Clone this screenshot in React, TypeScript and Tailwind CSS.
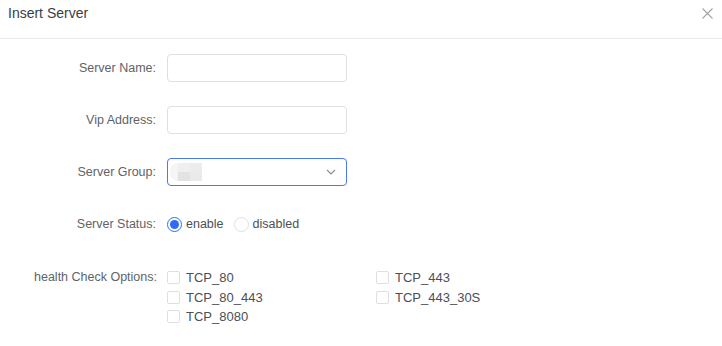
import { useState } from 'react';

const options = ['TCP_80', 'TCP_443', 'TCP_80_443', 'TCP_443_30S', 'TCP_8080'];

function Field({ label, children, className = '' }: { label: string; children: React.ReactNode; className?: string }) {
  return (
    <div className={`flex items-center ${className}`}>
      <label className="w-[157px] shrink-0 pr-[1px] text-right text-[12.5px] text-[#5f6368]">{label}</label>
      <div className="ml-[10px]">{children}</div>
    </div>
  );
}

export default function App() {
  const [status, setStatus] = useState('enable');
  const [checked, setChecked] = useState<string[]>([]);

  const toggle = (o: string) =>
    setChecked(checked.includes(o) ? checked.filter((x) => x !== o) : [...checked, o]);

  return (
    <div className="w-[722px] h-[346px] bg-white font-['Liberation_Sans',Arial,sans-serif] text-[#4b4f56]">
      {/* header */}
      <div className="h-[39px] border-b border-[#ebebeb] flex items-center justify-between pl-[8px] pr-[9px]">
        <span className="text-[14px] text-[#3a3d42] -mt-[12px]">Insert Server</span>
        <button className="-mt-[12px] text-[#a0a3a8]" aria-label="close">
          <svg width="11" height="11" viewBox="0 0 11 11" stroke="currentColor" strokeWidth="1.1">
            <path d="M0.5 0.5L10.5 10.5M10.5 0.5L0.5 10.5" />
          </svg>
        </button>
      </div>

      <div className="pt-[15px]">
        <Field label="Server Name:" className="h-[28px] mb-[24px]">
          <input className="w-[180px] h-[28px] rounded-[4px] border border-[#dcdfe6] outline-none px-2 text-[13px]" />
        </Field>
        <Field label="Vip Address:" className="h-[28px] mb-[24px]">
          <input className="w-[180px] h-[28px] rounded-[4px] border border-[#dcdfe6] outline-none px-2 text-[13px]" />
        </Field>
        <Field label="Server Group:" className="h-[28px] mb-[24px]">
          <div className="w-[180px] h-[28px] rounded-[4px] border border-[#4a78f5] flex items-center justify-between pl-[2px] pr-[10px]">
            <div className="flex items-center">
              <div className="w-[8px] h-[18px] bg-[#f5f5f6] rounded-l-full" />
              <div className="flex flex-col">
                <div className="flex">
                  <div className="w-[12px] h-[9px] bg-[#efeff0]" />
                  <div className="w-[12px] h-[9px] bg-[#ececed]" />
                </div>
                <div className="flex">
                  <div className="w-[12px] h-[9px] bg-[#e3e3e5]" />
                  <div className="w-[12px] h-[9px] bg-[#eaeaeb]" />
                </div>
              </div>
            </div>
            <svg width="10" height="6" viewBox="0 0 10 6" fill="none" stroke="#8a8e96" strokeWidth="1.2">
              <path d="M1 1L5 5L9 1" />
            </svg>
          </div>
        </Field>
        <Field label="Server Status:" className="h-[28px] mb-[26px]">
          <div className="flex items-center text-[12.5px] text-[#4b4f56]">
            {['enable', 'disabled'].map((s) => (
              <button key={s} onClick={() => setStatus(s)} className="flex items-center mr-[10px]">
                <span
                  className={`w-[15px] h-[15px] rounded-full border flex items-center justify-center ${
                    status === s ? 'border-[#2f6bf6]' : 'border-[#dcdfe6]'
                  }`}
                >
                  {status === s && <span className="w-[9px] h-[9px] rounded-full bg-[#2f6bf6]" />}
                </span>
                <span className="ml-[4px]">{s}</span>
              </button>
            ))}
          </div>
        </Field>
        <div className="flex items-start">
          <label className="w-[157px] shrink-0 text-right text-[12.5px] text-[#5f6368] leading-[19px] mt-[4px]">
            health Check Options:
          </label>
          <div className="ml-[10px] grid grid-cols-[209px_auto] mt-[4px]">
            {options.map((o) => (
              <button key={o} onClick={() => toggle(o)} className="flex items-center h-[19.5px] text-[13px] text-[#4b4f56]">
                <span
                  className={`w-[13px] h-[13px] rounded-[2px] border ${
                    checked.includes(o) ? 'border-[#2f6bf6] bg-[#2f6bf6]' : 'border-[#dcdfe6]'
                  }`}
                />
                <span className="ml-[6px]">{o}</span>
              </button>
            ))}
          </div>
        </div>
      </div>
    </div>
  );
}
